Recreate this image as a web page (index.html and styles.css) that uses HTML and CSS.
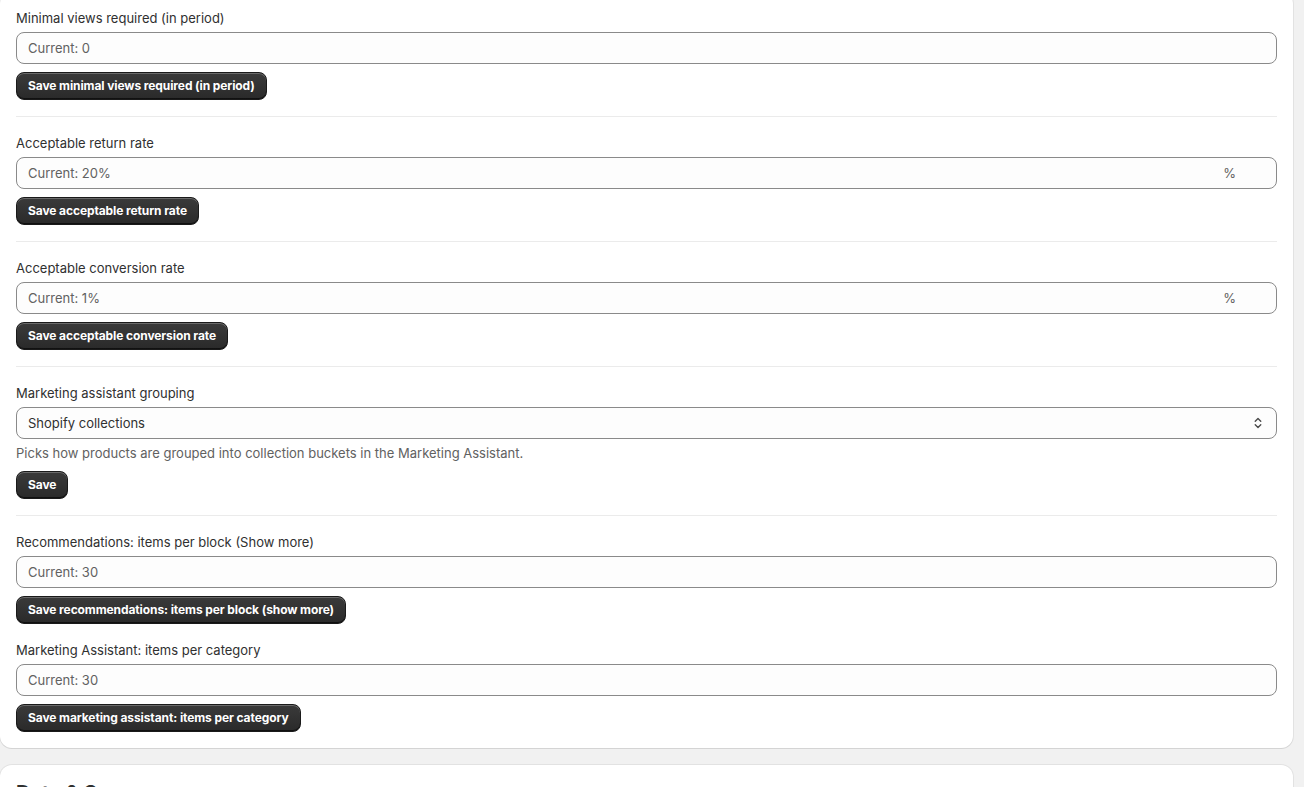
FILE: index.html
```html
<!DOCTYPE html>
<html lang="en">
<head>
<meta charset="utf-8">
<title>Settings</title>
<link rel="stylesheet" href="styles.css">
</head>
<body>
<div class="page">
  <div class="card settings">
    <div class="section">
      <label class="label">Minimal views required (in period)</label>
      <div class="field"><span class="placeholder">Current: 0</span></div>
      <div class="actions"><button class="btn">Save minimal views required (in period)</button></div>
    </div>
    <hr class="divider">
    <div class="section">
      <label class="label">Acceptable return rate</label>
      <div class="field"><span class="placeholder">Current: 20%</span><span class="suffix">%</span></div>
      <div class="actions"><button class="btn">Save acceptable return rate</button></div>
    </div>
    <hr class="divider">
    <div class="section">
      <label class="label">Acceptable conversion rate</label>
      <div class="field"><span class="placeholder">Current: 1%</span><span class="suffix">%</span></div>
      <div class="actions"><button class="btn">Save acceptable conversion rate</button></div>
    </div>
    <hr class="divider">
    <div class="section">
      <label class="label">Marketing assistant grouping</label>
      <div class="field select"><span class="value">Shopify collections</span>
        <svg class="chevron" viewBox="0 0 20 20" width="20" height="20" aria-hidden="true"><path d="M7.25 8.25 10 5.5l2.75 2.75M7.25 11.75 10 14.5l2.75-2.75" fill="none" stroke="#4a4a4a" stroke-width="1.4" stroke-linecap="round" stroke-linejoin="round"/></svg>
      </div>
      <p class="help">Picks how products are grouped into collection buckets in the Marketing Assistant.</p>
      <div class="actions"><button class="btn">Save</button></div>
    </div>
    <hr class="divider">
    <div class="section">
      <label class="label">Recommendations: items per block (Show more)</label>
      <div class="field"><span class="placeholder">Current: 30</span></div>
      <div class="actions"><button class="btn">Save recommendations: items per block (show more)</button></div>
    </div>
    <div class="section spaced">
      <label class="label">Marketing Assistant: items per category</label>
      <div class="field"><span class="placeholder">Current: 30</span></div>
      <div class="actions"><button class="btn">Save marketing assistant: items per category</button></div>
    </div>
  </div>
  <div class="card next">
    <h2 class="heading">Data &amp; Sync</h2>
  </div>
</div>
</body>
</html>
```
FILE: styles.css
```css
html, body {
  margin: 0;
  padding: 0;
  background: #f1f1f1;
  height: 100%;
  overflow: hidden;
}
body {
  font-family: Inter, "Noto Sans", "Liberation Sans", sans-serif;
  font-size: 13px;
  line-height: 20px;
  color: #303030;
}
.page {
  padding: 0 11px 0 0;
  display: flex;
  flex-direction: column;
  gap: 17px;
}
.card {
  background: #ffffff;
  border-radius: 12px;
  box-shadow: 0 1px 0 0 rgba(26, 26, 26, 0.07), 0 0 0 1px rgba(0, 0, 0, 0.06);
}
.settings {
  margin-top: -8px;
  padding: 16px;
  display: flex;
  flex-direction: column;
}
.section {
  display: flex;
  flex-direction: column;
}
.section.spaced {
  margin-top: 16px;
}
.label {
  display: block;
  height: 20px;
  margin-bottom: 4px;
  color: #303030;
}
.field {
  height: 32px;
  box-sizing: border-box;
  border: 1px solid #8a8a8a;
  border-radius: 8px;
  background: #fdfdfd;
  display: flex;
  align-items: center;
  padding: 0 12px 0 11px;
}
.placeholder {
  flex: 1;
  color: #616161;
}
.suffix {
  color: #616161;
  margin-right: 28px;
}
.select .value {
  flex: 1;
  color: #303030;
}
.chevron {
  margin-right: -4px;
}
.help {
  margin: 4px 0 0;
  color: #616161;
}
.actions {
  margin-top: 8px;
  display: flex;
}
.btn {
  font-family: Inter, "Noto Sans", "Liberation Sans", sans-serif;
  font-size: 12px;
  font-weight: 650;
  letter-spacing: -0.1px;
  line-height: 16px;
  color: #ffffff;
  background: linear-gradient(#3a3a3a, #2a2a2a);
  border: 1px solid #1a1a1a;
  border-radius: 8px;
  padding: 5px 11px;
  height: 28px;
  box-sizing: border-box;
  box-shadow: inset 0 1px 0 0 rgba(255, 255, 255, 0.25), inset 0 -1px 0 0 rgba(0, 0, 0, 0.6);
  cursor: pointer;
  white-space: nowrap;
}
.divider {
  border: 0;
  border-top: 1px solid #ebebeb;
  margin: 16px 0;
  height: 0;
}
.next {
  padding: 16px;
  min-height: 60px;
}
.heading {
  margin: 0;
  font-size: 20px;
  line-height: 24px;
  font-weight: 700;
  color: #303030;
}
```
